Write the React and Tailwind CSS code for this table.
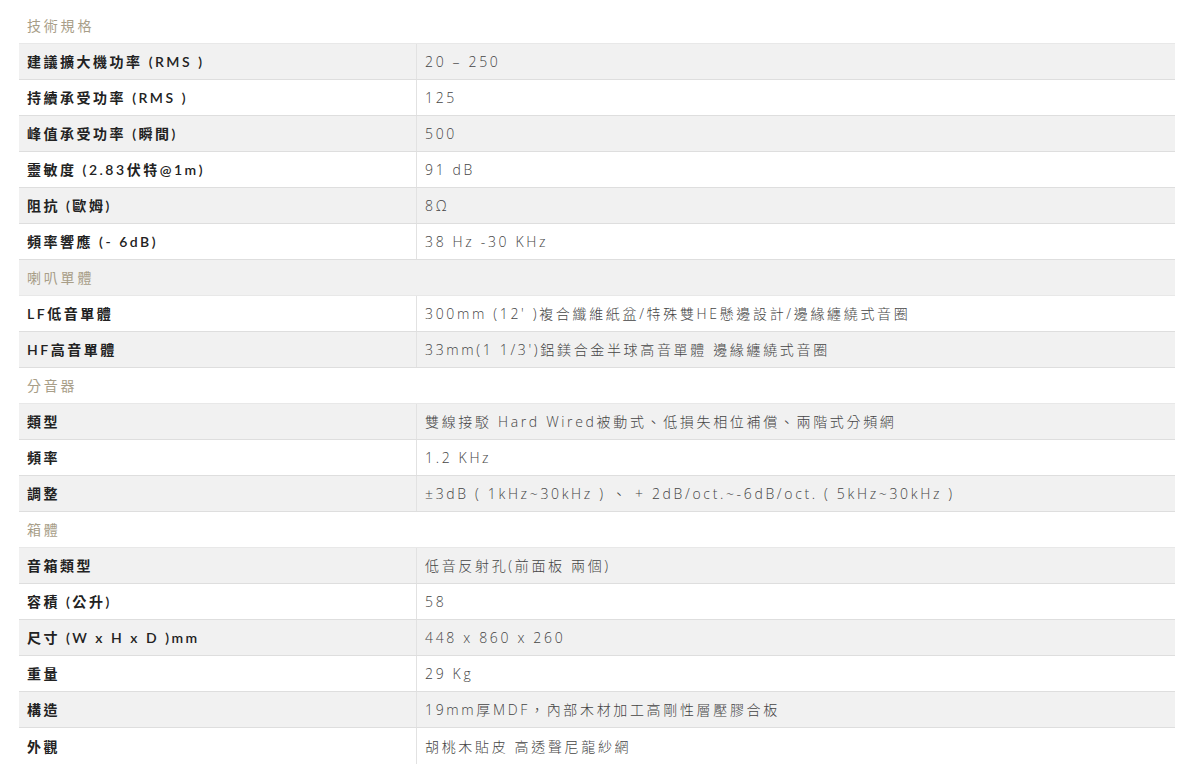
const rows = [
  { section: '技術規格' },
  { label: '建議擴大機功率 (RMS )', value: '20 – 250' },
  { label: '持續承受功率 (RMS )', value: '125' },
  { label: '峰值承受功率 (瞬間)', value: '500' },
  { label: '靈敏度 (2.83伏特@1m)', value: '91 dB' },
  { label: '阻抗 (歐姆)', value: '8Ω' },
  { label: '頻率響應 (- 6dB)', value: '38 Hz -30 KHz' },
  { section: '喇叭單體' },
  { label: 'LF低音單體', value: "300mm (12' )複合纖維紙盆/特殊雙HE懸邊設計/邊緣纏繞式音圈" },
  { label: 'HF高音單體', value: "33mm(1 1/3')鋁鎂合金半球高音單體 邊緣纏繞式音圈" },
  { section: '分音器' },
  { label: '類型', value: '雙線接駁 Hard Wired被動式、低損失相位補償、兩階式分頻網' },
  { label: '頻率', value: '1.2 KHz' },
  { label: '調整', value: '±3dB ( 1kHz~30kHz ) 、 + 2dB/oct.~-6dB/oct. ( 5kHz~30kHz )' },
  { section: '箱體' },
  { label: '音箱類型', value: '低音反射孔(前面板 兩個)' },
  { label: '容積 (公升)', value: '58' },
  { label: '尺寸 (W x H x D )mm', value: '448 x 860 x 260' },
  { label: '重量', value: '29 Kg' },
  { label: '構造', value: '19mm厚MDF，內部木材加工高剛性層壓膠合板' },
  { label: '外觀', value: '胡桃木貼皮 高透聲尼龍紗網' },
];

const labelFont = { fontFamily: '"Lato", "Noto Sans CJK TC", sans-serif' };
const valueFont = { fontFamily: '"Open Sans", "Noto Sans CJK TC", sans-serif' };

export default function App() {
  return (
    <div className="min-h-screen bg-white pt-2 pl-[19px] pr-[17px]" style={labelFont}>
      <div className="flex flex-col">
        {rows.map((r, i) => {
          const bg = i % 2 === 1 ? 'bg-[#f1f1f1]' : 'bg-white';
          const last = i === rows.length - 1;
          if (r.section) {
            return (
              <div key={i} className={`h-9 flex items-center px-2 ${bg} border-b border-[#e8e8e8]`}>
                <span className="text-[14px] tracking-[0.2em] text-[#a89e88]">{r.section}</span>
              </div>
            );
          }
          return (
            <div key={i} className={`h-9 flex ${bg} ${last ? '' : 'border-b border-[#dedede]'}`}>
              <div className="w-[398px] shrink-0 flex items-center px-2 border-r border-[#e2e2e2]">
                <span className="text-[14px] font-semibold tracking-[0.18em] text-[#222]">{r.label}</span>
              </div>
              <div className="flex-1 flex items-center px-2">
                <span className="text-[14px] font-light tracking-[0.19em] text-[#444]" style={valueFont}>
                  {r.value}
                </span>
              </div>
            </div>
          );
        })}
      </div>
    </div>
  );
}
